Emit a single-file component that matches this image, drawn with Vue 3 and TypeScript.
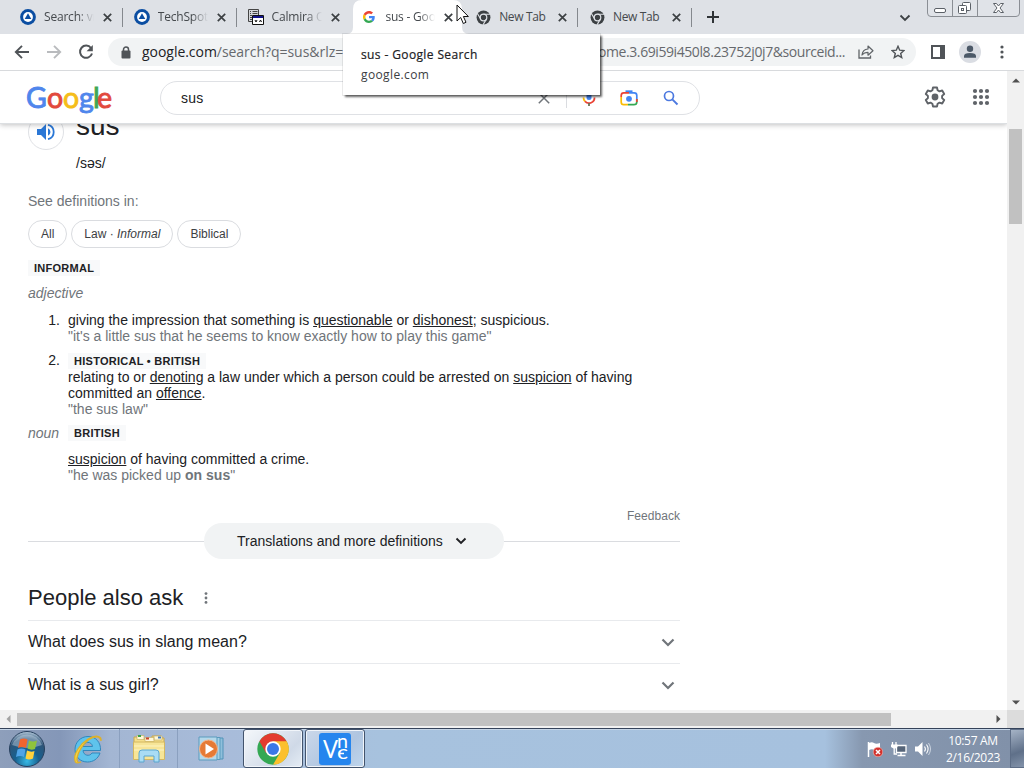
<script setup lang="ts">
interface Tab {
  title: string
  icon: 'spot' | 'calmira' | 'google' | 'chrome'
  active?: boolean
  divider?: boolean
}

const tabs: Tab[] = [
  { title: 'Search: vn', icon: 'spot', divider: true },
  { title: 'TechSpot', icon: 'spot', divider: true },
  { title: 'Calmira O', icon: 'calmira' },
  { title: 'sus - Goo', icon: 'google', active: true },
  { title: 'New Tab', icon: 'chrome', divider: true },
  { title: 'New Tab', icon: 'chrome', divider: true },
]

const questions: string[] = ['What does sus in slang mean?', 'What is a sus girl?']
const dots: number[] = [3, 9, 15]
</script>

<template>
  <div class="screen">
    <div class="tabstrip">
      <div v-for="(t, i) in tabs" :key="i" class="tab" :class="{ active: t.active, divider: t.divider }">
        <svg v-if="t.active" class="tab-shape" width="122" height="34" viewBox="0 0 122 34">
          <path d="M0 34Q6 34 6 27V9Q6 0 15 0H106Q115 0 115 9V27Q115 34 122 34Z" fill="#fff" />
        </svg>
        <svg v-if="t.icon === 'spot'" class="fav" viewBox="0 0 16 16">
          <circle cx="8" cy="8" r="7.9" fill="#0b4ea2" />
          <circle cx="8" cy="8" r="4.9" fill="#fff" />
          <path d="M8 4.3L11.3 10H4.7Z" fill="#0b4ea2" />
        </svg>
        <svg v-else-if="t.icon === 'calmira'" class="fav" viewBox="0 0 16 16">
          <path d="M.5.5h10v12h-10z" fill="#d5d7da" stroke="#444" />
          <path d="M2 2.500h1M4.500 2.500h5M2 4.500h1M4.500 4.500h5M2 6.500h2M2 8.500h2M2 10.500h2" stroke="#444" />
          <path d="M4.500 6.500h11v9h-11z" fill="#fff" stroke="#111" />
          <path d="M5 7h10v2H5z" fill="#14148c" />
          <path d="M7 11l1 2 1-2M11.500 13l1-2 1 2" fill="none" stroke="#111" />
        </svg>
        <svg v-else-if="t.icon === 'google'" class="fav" viewBox="0 0 48 48">
          <path d="M24 9.500c3.500 0 6.700 1.200 9.200 3.600l6.900-6.900C35.900 2.400 30.500 0 24 0 14.600 0 6.500 5.400 2.600 13.200l8 6.200C12.400 13.700 17.700 9.500 24 9.500z" fill="#ea4335" />
          <path d="M47 24.500c0-1.600-.2-3.100-.4-4.500H24v9h12.900c-.6 3-2.300 5.500-4.800 7.200l7.700 6C44.400 38 47 31.800 47 24.500z" fill="#4285f4" />
          <path d="M10.500 28.600a14.500 14.500 0 010-9.200l-8-6.200a24 24 0 000 21.600z" fill="#fbbc05" />
          <path d="M24 48c6.500 0 11.900-2.100 15.900-5.800l-7.700-6c-2.200 1.500-4.900 2.300-8.200 2.300-6.300 0-11.600-4.200-13.500-9.900l-8 6.200C6.500 42.600 14.600 48 24 48z" fill="#34a853" />
        </svg>
        <svg v-else class="fav" viewBox="0 0 16 16">
          <circle cx="8" cy="8" r="7.400" fill="#3c4043" />
          <circle cx="8" cy="8" r="3.500" fill="#3c4043" stroke="#dee1e6" stroke-width="1.300" />
          <path d="M8 4.500H15M4.950 9.700L1.500 3.700M11.050 9.700L7.500 15.800" stroke="#dee1e6" stroke-width="1.200" />
        </svg>
        <span class="tab-title" :class="{ fade: t.icon !== 'chrome' }">{{ t.title }}</span>
        <svg class="x" width="9" height="9" viewBox="0 0 9 9"><path d="M.8.800l7.400 7.400M8.200.800L.8 8.200" stroke="#3c4043" stroke-width="1.700" /></svg>
      </div>
      <svg class="plus" width="12" height="12" viewBox="0 0 12 12"><path d="M6 0v12M0 6h12" stroke="#2f3336" stroke-width="2" /></svg>
      <svg class="tab-menu" width="12" height="8" viewBox="0 0 12 8"><path d="M1.500 1.500L6 6l4.500-4.500" fill="none" stroke="#3c4043" stroke-width="1.800" /></svg>
      <svg class="winctl" width="94" height="18" viewBox="0 0 94 18">
        <path d="M.5-2V13q0 3.500 3.500 3.500H89q3.500 0 3.500-3.500V-2M25.500 0v16M50.500 0v16" fill="#e0e3e8" stroke="#8a8e94" />
        <g fill="#fff" stroke="#5b6067">
          <rect x="7.500" y="8.500" width="11" height="4" rx="1.500" />
          <rect x="35.500" y="2.500" width="8" height="8" rx="1" />
          <rect x="31.500" y="5.500" width="8" height="8" rx="1" />
          <rect x="34.500" y="8.500" width="2" height="2" />
          <path d="M66.500 3.500h3l2 2.500 2-2.500h3l-3.500 4.500 3.500 4.500h-3l-2-2.500-2 2.500h-3L70 8z" />
        </g>
      </svg>
    </div>

    <div class="toolbar">
      <svg class="nav" width="16" height="14" viewBox="0 0 16 14"><path d="M15 7H2M8 .8L1.800 7 8 13.200" fill="none" stroke="#505458" stroke-width="1.900" /></svg>
      <svg class="nav fwd" width="16" height="14" viewBox="0 0 16 14"><path d="M1 7h13M8 .8L14.200 7 8 13.200" fill="none" stroke="#b9bbbe" stroke-width="1.900" /></svg>
      <svg class="nav reload" width="16" height="16" viewBox="0 0 16 16">
        <path d="M13 4A6.100 6.100 0 1014 9.500" fill="none" stroke="#505458" stroke-width="2" />
        <path d="M14.800 1v6.200H8.600z" fill="#505458" />
      </svg>
      <div class="omnibox">
        <svg class="lock" width="10" height="13" viewBox="0 0 10 13">
          <rect x=".5" y="4.500" width="9" height="8" rx="1" fill="#505458" />
          <path d="M2.500 5V3.500a2.500 2.500 0 015 0V5" fill="none" stroke="#505458" stroke-width="1.500" />
        </svg>
        <span class="url"><b>google.com</b>/search?q=sus&amp;rlz=1</span>
        <span class="url tail">ome.3.69i59i450l8.23752j0j7&amp;sourceid...</span>
        <svg class="share" width="16" height="14" viewBox="0 0 16 14">
          <path d="M1 4.500V13h11.500V10.500" fill="none" stroke="#606468" stroke-width="1.300" />
          <path d="M4 10C4.500 6 6.500 4.200 10 4V1l5 4.700-5 4.500V7.300C7.500 7.300 5.600 8 4 10z" fill="none" stroke="#606468" stroke-width="1.200" stroke-linejoin="round" />
        </svg>
        <svg class="star" width="14" height="14" viewBox="0 0 14 14"><path d="M7 1.300l1.700 3.900 4.200.400-3.200 2.800 1 4.100L7 10.300l-3.700 2.200 1-4.100L1.100 5.600l4.200-.4z" fill="none" stroke="#505458" stroke-width="1.400" /></svg>
      </div>
      <svg class="panel" width="14" height="14" viewBox="0 0 14 14"><rect x="1" y="1" width="12" height="12" fill="none" stroke="#505458" stroke-width="2" /><path d="M9 1h4v12H9z" fill="#505458" /></svg>
      <svg class="avatar" width="22" height="22" viewBox="0 0 22 22">
        <circle cx="11" cy="11" r="11" fill="#dadde3" />
        <circle cx="11" cy="7.800" r="3.200" fill="#4c5968" />
        <path d="M5 16.800V15q0-3 6-3t6 3v1.800z" fill="#4c5968" />
      </svg>
      <svg class="kebab" width="4" height="14" viewBox="0 0 4 14"><g fill="#505458"><circle cx="2" cy="2" r="1.600" /><circle cx="2" cy="7" r="1.600" /><circle cx="2" cy="12" r="1.600" /></g></svg>
    </div>

    <div class="body">
      <div class="page">
        <header class="gheader">
          <svg class="glogo" width="92" height="36" viewBox="0 0 92 36">
            <text y="26" font-family="Lato, 'Open Sans', sans-serif" font-size="28.500" stroke-width=".9">
              <tspan x="1" fill="#4f86ec" stroke="#4f86ec">G</tspan><tspan x="22" fill="#e2493d" stroke="#e2493d">o</tspan><tspan x="38" fill="#f5bd1a" stroke="#f5bd1a">o</tspan><tspan x="54" fill="#4f86ec" stroke="#4f86ec">g</tspan><tspan x="68" fill="#3fa757" stroke="#3fa757">l</tspan><tspan x="72" fill="#e2493d" stroke="#e2493d">e</tspan>
            </text>
          </svg>
          <div class="search">
            <span>sus</span>
            <svg class="clear" width="12" height="12" viewBox="0 0 12 12"><path d="M.8.800l10.400 10.400M11.200.800L.8 11.200" stroke="#70757a" stroke-width="1.500" /></svg>
            <i class="bar"></i>
            <svg class="mic" width="16" height="20" viewBox="0 0 16 20">
              <rect x="5.500" y="2" width="5" height="10" rx="2.500" fill="#4285f4" />
              <path d="M2.500 9.500A5.500 5.500 0 004 13.400" fill="none" stroke="#fbbc05" stroke-width="1.800" />
              <path d="M4 13.400a5.500 5.500 0 009.500-3.900" fill="none" stroke="#ea4335" stroke-width="1.800" />
              <path d="M8 15v3" stroke="#6b6f55" stroke-width="1.800" />
            </svg>
            <svg class="lens" width="18" height="16" viewBox="0 0 18 16">
              <path d="M5.500 1.200h7" stroke="#4285f4" stroke-width="1.700" />
              <path d="M1.200 7V5.500q0-2.600 2.600-2.600H9" fill="none" stroke="#ea4335" stroke-width="1.700" />
              <path d="M9 2.900h5.200q2.600 0 2.600 2.600V9" fill="none" stroke="#4285f4" stroke-width="1.700" />
              <path d="M1.200 7v5q0 2.700 2.600 2.700H8" fill="none" stroke="#fbbc05" stroke-width="1.700" />
              <path d="M8 14.700h5.800q3 0 3-2.700V9" fill="none" stroke="#34a853" stroke-width="1.700" />
              <path d="M16.800 9v3" stroke="#ea4335" stroke-width="1.700" />
              <circle cx="9" cy="8.800" r="2.900" fill="#4285f4" />
            </svg>
            <svg class="mag" width="16" height="16" viewBox="0 0 16 16"><circle cx="6" cy="6" r="4.500" fill="none" stroke="#4c79e0" stroke-width="1.700" /><path d="M9.300 9.300l5.200 5.200" stroke="#4c79e0" stroke-width="1.900" /></svg>
          </div>
          <svg class="gear" width="22" height="22" viewBox="0 0 22 22">
            <path d="M9 1.500h4l.6 2.800 1.900 1.100 2.700-.9 2 3.500-2.100 1.900v2.200l2.100 1.900-2 3.500-2.700-.9-1.900 1.100-.6 2.800H9l-.6-2.800-1.900-1.100-2.700.9-2-3.500 2.100-1.900V9.900L1.800 8l2-3.500 2.700.9 1.900-1.100z" fill="none" stroke="#5f6368" stroke-width="1.900" stroke-linejoin="round" />
            <circle cx="11" cy="11" r="3.400" fill="#5f6368" />
          </svg>
          <svg class="apps" width="18" height="18" viewBox="0 0 18 18">
            <template v-for="y in dots" :key="y"><circle v-for="x in dots" :key="x" :cx="x" :cy="y" r="2.100" fill="#5f6368" /></template>
          </svg>
        </header>

        <main class="content">
          <div class="word">
            <div class="speaker">
              <svg width="18" height="18" viewBox="0 0 18 18">
                <path d="M0 6v6h4l5 5V1L4 6z" fill="#2a77d6" />
                <path d="M11 5.300a4 4 0 010 7.400z" fill="#2a77d6" />
                <path d="M11 1.800a7.400 7.400 0 010 14.400" fill="none" stroke="#2a77d6" stroke-width="1.800" />
              </svg>
            </div>
            <h1>sus</h1>
          </div>
          <div class="phon">/səs/</div>
          <div class="see">See definitions in:</div>
          <div class="chips">
            <span>All</span><span>Law · <em>Informal</em></span><span>Biblical</span>
          </div>
          <div class="row r-inf"><span class="badge">INFORMAL</span></div>
          <div class="row pos"><em>adjective</em></div>
          <ol class="defs">
            <li>
              <span class="num">1.</span>
              <div>
                <p>giving the impression that something is <u>questionable</u> or <u>dishonest</u>; suspicious.</p>
                <p class="ex">"it's a little sus that he seems to know exactly how to play this game"</p>
              </div>
            </li>
            <li>
              <span class="num">2.</span>
              <div>
                <div class="tagline"><span class="badge">HISTORICAL • BRITISH</span></div>
                <p>relating to or <u>denoting</u> a law under which a person could be arrested on <u>suspicion</u> of having</p>
                <p>committed an <u>offence</u>.</p>
                <p class="ex">"the sus law"</p>
              </div>
            </li>
          </ol>
          <div class="row noun"><em>noun</em><span class="badge">BRITISH</span></div>
          <div class="noun-def">
            <p><u>suspicion</u> of having committed a crime.</p>
            <p class="ex">"he was picked up <b>on sus</b>"</p>
          </div>
          <div class="feedback">Feedback</div>
          <div class="more">
            <i></i>
            <div class="more-btn">
              <span>Translations and more definitions</span>
              <svg width="12" height="8" viewBox="0 0 12 8"><path d="M1.500 1.500L6 6l4.500-4.500" fill="none" stroke="#202124" stroke-width="1.900" /></svg>
            </div>
            <i></i>
          </div>
          <div class="paa">
            <h2>People also ask</h2>
            <svg width="4" height="12" viewBox="0 0 4 12"><g fill="#70757a"><circle cx="2" cy="1.600" r="1.400" /><circle cx="2" cy="6" r="1.400" /><circle cx="2" cy="10.400" r="1.400" /></g></svg>
          </div>
          <div v-for="q in questions" :key="q" class="q">
            <span>{{ q }}</span>
            <svg width="14" height="9" viewBox="0 0 14 9"><path d="M1.500 1.500L7 7l5.500-5.500" fill="none" stroke="#70757a" stroke-width="2.200" /></svg>
          </div>
        </main>
      </div>
      <div class="vscroll">
        <svg width="8" height="5" viewBox="0 0 8 5"><path d="M0 4.500L4 .5l4 4z" fill="#505050" /></svg>
        <div class="vthumb"></div>
        <svg class="down" width="8" height="5" viewBox="0 0 8 5"><path d="M0 .5l4 4 4-4z" fill="#505050" /></svg>
      </div>
    </div>

    <div class="hscroll">
      <svg width="5" height="8" viewBox="0 0 5 8"><path d="M4.500 0L.5 4l4 4z" fill="#a3a3a3" /></svg>
      <div class="hthumb"></div>
      <svg class="right" width="5" height="8" viewBox="0 0 5 8"><path d="M.5 0l4 4-4 4z" fill="#505050" /></svg>
      <div class="corner"></div>
    </div>

    <footer class="taskbar">
      <div class="cell start">
        <svg width="38" height="38" viewBox="0 0 38 38">
          <defs>
            <radialGradient id="orb" cx=".5" cy=".85" r=".85"><stop offset="0" stop-color="#37b9e6" /><stop offset=".4" stop-color="#17608f" /><stop offset=".75" stop-color="#2e5578" /><stop offset="1" stop-color="#b7cbdd" /></radialGradient>
          </defs>
          <circle cx="19" cy="19" r="17.500" fill="url(#orb)" stroke="#27405e" />
          <path d="M4 15A16 16 0 0134 15Q19 21 4 15z" fill="#d8e6f2" opacity=".4" />
          <path d="M12 9.500q3.500-2 7.500 0L18 18q-4-2-8 0z" fill="#f0652f" />
          <path d="M21 10.500q4 2 8 0L27 19q-4 1.500-7.500-.5z" fill="#8fc43c" />
          <path d="M9.500 19.500q4-2 8 0L16 27q-4-2-8 0z" fill="#4fa4e8" />
          <path d="M19 20.500q4 2 7.500.5L25 28.500q-4 2-7.500 0z" fill="#ffd23d" />
        </svg>
      </div>
      <div class="cell ie">
        <svg width="34" height="34" viewBox="0 0 34 34">
          <path d="M17 4.500c8 0 13 6 12.500 14H12c.4 5 6.500 6.500 9 2.500h8c-2 6-7 9-12.500 9C9 30 4 24.500 4 17.500S9.500 4.500 17 4.500zM12 14.500h9.500c-.5-5.500-8.800-5.500-9.500 0z" fill="#5fc3ec" stroke="#3088bd" />
          <path d="M30 9C31 4 25 2 17 7 9 12 2 22 4 29c.5 2.500 2.500 2.500 6 1-3 1-4.500 0-4-4C7 20 12 12 18 7.500 24 3.500 29 4 30 9z" fill="#f7d442" stroke="#dcb02c" stroke-width="1.200" />
        </svg>
      </div>
      <div class="cell explorer">
        <svg width="34" height="32" viewBox="0 0 34 32">
          <path d="M2 4h8l1 2h9V3h9l1 2h2v20H2z" fill="#f5df8b" stroke="#c8a850" />
          <path d="M5 2.500h7v4H5zM13 4.500h9v4h-9zM22 3h8v4h-8z" fill="#fff7d8" stroke="#c9b36a" stroke-width=".7" />
          <path d="M6 3h3" stroke="#38a249" stroke-width="2" /><path d="M14 5.500h3" stroke="#c9432c" stroke-width="2" /><path d="M26 4.500h3" stroke="#3d79c4" stroke-width="2" />
          <path d="M1.500 9h31v17.500h-31z" fill="#f7e597" stroke="#d4b861" />
          <path d="M2 13h30M2 17h30" stroke="#fdf4c2" />
          <path d="M7 29V20q0-3 3-3h14q3 0 3 3v9h-5v-6H12v6z" fill="#a9dcf4" stroke="#5ba6cf" />
        </svg>
      </div>
      <div class="cell player">
        <svg width="28" height="28" viewBox="0 0 28 28">
          <path d="M8 3h18v21H8z" fill="#8fbfdb" stroke="#5193b8" /><path d="M5 2.500h18v22H5z" fill="#a5d0e5" stroke="#5a9bbd" /><path d="M2 2h18v23H2z" fill="#b4d8ea" stroke="#5a9bbd" />
          <circle cx="11.500" cy="14" r="9" fill="#e67a35" stroke="#f2b48b" />
          <path d="M8.500 8.500v11l8.500-5.500z" fill="#fff" />
        </svg>
      </div>
      <div class="cell win chrome">
        <svg width="32" height="32" viewBox="0 0 48 48">
          <circle cx="24" cy="24" r="23.500" fill="#34a853" />
          <path d="M24 12h20.350A23.500 23.500 0 0124 47.500L34.400 30z" fill="#fbc02d" />
          <path d="M3.650 12.250A23.500 23.500 0 0144.350 12.250H24L13.600 30z" fill="#e33b2e" />
          <circle cx="24" cy="24" r="11.500" fill="#fff" /><circle cx="24" cy="24" r="9" fill="#3b78e7" />
        </svg>
      </div>
      <div class="cell win vnc">
        <svg width="32" height="32" viewBox="0 0 32 32">
          <rect width="32" height="32" rx="3" fill="#2585ee" />
          <g fill="#fff" font-family="Lato, sans-serif">
            <text x="4" y="25" font-size="25" textLength="15" lengthAdjust="spacingAndGlyphs">V</text>
            <text x="18" y="15" font-size="19" textLength="11" lengthAdjust="spacingAndGlyphs">n</text>
            <text x="18" y="26" font-size="19" textLength="11" lengthAdjust="spacingAndGlyphs">c</text>
          </g>
          <path d="M20 20.500h5" stroke="#fff" stroke-width="1.500" />
        </svg>
      </div>
      <div class="tray">
        <svg width="16" height="16" viewBox="0 0 16 16">
          <path d="M1.500 1v15" stroke="#fff" stroke-width="1.500" /><path d="M2 2q3-1.500 5 0t6 0v7q-3 1.500-5.500 0T2 9z" fill="#fff" />
          <circle cx="11" cy="11" r="4.800" fill="#d3312c" stroke="#f3c2bd" stroke-width=".6" /><path d="M9 9l4 4M13 9l-4 4" stroke="#fff" stroke-width="1.500" />
        </svg>
        <svg width="16" height="16" viewBox="0 0 16 16">
          <path d="M5.500 4.500h9.500v7H5.500z" fill="#566579" stroke="#fff" stroke-width="1.300" /><path d="M10 12v2M6.500 14.500h8" stroke="#fff" stroke-width="1.500" />
          <path d="M1.500 1v3M5 1v3" stroke="#fff" stroke-width="1.300" /><path d="M0 3.500h6.500V6l-2 1.500h-2L0 6z" fill="#fff" /><path d="M3.200 7v6H6" fill="none" stroke="#fff" stroke-width="1.300" />
        </svg>
        <svg width="16" height="16" viewBox="0 0 16 16">
          <path d="M0 5.500v5h3l4.500 4.500V1L3 5.500z" fill="#fff" />
          <path d="M9.500 5.500q1.800 2.500 0 5M11.500 3.500q3.200 4.500 0 9" fill="none" stroke="#fff" stroke-width="1.100" /><path d="M13.500 2q4 6 0 12" fill="none" stroke="#d5dde8" stroke-width=".9" />
        </svg>
      </div>
      <div class="clock"><span>10:57 AM</span><span>2/16/2023</span></div>
      <div class="peek"></div>
    </footer>

    <div class="tooltip">
      <div class="tt1">sus - Google Search</div>
      <div class="tt2">google.com</div>
    </div>
    <svg class="cursor" width="14" height="21" viewBox="0 0 14 21"><path d="M1 1v16l3.700-3.500 2.600 6 2.700-1.200-2.600-5.800h5z" fill="#fff" stroke="#111" /></svg>
  </div>
</template>

<style>
body { margin: 0; overflow: hidden; }
</style>

<style scoped>
.screen { position: relative; width: 1024px; height: 768px; overflow: hidden; display: flex; flex-direction: column; background: #fff; font-family: "Liberation Sans", Arial, sans-serif; color: #202124; }
.screen svg { display: block; flex: none; }
h1, h2, p, ol { margin: 0; padding: 0; font-weight: 400; list-style: none; }

.tabstrip { height: 34px; flex: none; display: flex; align-items: center; background: #dee1e6; padding-left: 9px; box-sizing: border-box; }
.tab { position: relative; width: 113.8px; height: 34px; flex: none; box-sizing: border-box; padding-left: 11px; display: flex; align-items: center; }
.tab.divider { background: linear-gradient(#84888d, #84888d) right 8px / 1px 19px no-repeat; }
.tab-shape { position: absolute; left: -3px; top: 0; }
.fav { position: relative; width: 16px; height: 16px; }
.tab:nth-child(4) .fav { width: 12px; height: 12px; margin: 0 2px; }
.tab:nth-child(n+5) .fav { width: 15px; height: 15px; margin: 0 0 0 1px; }
.tab-title { position: relative; width: 50px; margin-left: 8px; font: 12px/16px "Open Sans", "Noto Sans", sans-serif; letter-spacing: -.2px; color: #45494d; white-space: nowrap; overflow: hidden; }
.tab:nth-child(n+5) .tab-title { letter-spacing: -.35px; }
.fade { -webkit-mask-image: linear-gradient(90deg, #000 68%, transparent 100%); mask-image: linear-gradient(90deg, #000 68%, transparent 100%); }
.x { position: relative; margin-left: 9px; }
.plus { margin-left: 15px; }
.tab-menu { margin-left: 180px; margin-top: 1px; }
.winctl { align-self: flex-start; margin-left: 16px; }

.toolbar { height: 37px; flex: none; box-sizing: border-box; border-bottom: 1px solid #d8dadd; display: flex; align-items: center; padding-left: 14px; background: #fff; }
.fwd { margin-left: 16px; }
.reload { margin-left: 16px; }
.omnibox { width: 808px; height: 28px; margin-left: 14px; border-radius: 14px; background: #f1f3f4; display: flex; align-items: center; box-sizing: border-box; padding-left: 13px; }
.url { margin-left: 11px; font: 14px/20px "Open Sans", "Noto Sans", sans-serif; letter-spacing: -.04px; color: #66696d; white-space: nowrap; width: 240px; flex: none; }
.url b { font-weight: 400; color: #202124; }
.url.tail { width: 246px; margin-left: 217px; display: flex; justify-content: flex-end; letter-spacing: -.42px; }
.share { margin-left: 13px; }
.star { margin-left: 17px; }
.panel { margin-left: 15px; }
.avatar { margin-left: 14px; }
.kebab { margin-left: 19px; }

.body { height: 639px; flex: none; display: flex; overflow: hidden; }
.page { width: 1007px; }
.gheader { position: relative; z-index: 2; height: 53px; background: #fff; border-bottom: 1px solid #dcdfe2; box-shadow: 0 1px 5px rgba(32, 33, 36, .28); display: flex; box-sizing: border-box; padding-left: 25px; clip-path: inset(0 0 -8px 0); }
.glogo { margin-top: 11px; }
.search { width: 540px; height: 34px; margin: 10px 0 0 43px; box-sizing: border-box; border: 1px solid #dfe1e5; border-radius: 17px; display: flex; align-items: center; padding-left: 20px; font-size: 14px; }
.search span { width: 357px; letter-spacing: .2px; }
.bar { width: 1px; height: 20px; background: #dadce0; margin-left: 16px; }
.mic { margin-left: 14px; }
.lens { margin-left: 23px; }
.mag { margin-left: 25px; }
.gear { margin: 15px 0 0 224px; }
.apps { margin: 17px 0 0 26px; }

.content { width: 652px; margin: -53px 0 0 28px; font-size: 14px; line-height: 16px; }
.word { height: 82px; display: flex; }
.speaker { width: 36px; height: 36px; box-sizing: border-box; border: 1px solid #dfe1e5; border-radius: 50%; margin-top: 43px; display: flex; align-items: center; justify-content: center; }
.word h1 { font-size: 28px; line-height: 32px; margin: 39px 0 0 12px; }
.phon { height: 20px; line-height: 20px; padding-left: 48px; }
.see { margin-top: 18px; height: 20px; line-height: 20px; color: #70757a; }
.chips { margin-top: 9px; display: flex; gap: 4px; }
.chips span { box-sizing: border-box; height: 28px; line-height: 26px; border: 1px solid #dadce0; border-radius: 14px; padding: 0 12px; font-size: 12px; color: #3c4043; white-space: nowrap; }
.row { height: 16px; display: flex; align-items: center; }
.r-inf { margin-top: 12px; }
.badge { display: block; background: #f8f9fa; font-size: 11px; font-weight: 700; letter-spacing: .27px; line-height: 16px; padding: 0 6px; white-space: nowrap; }
em { font-style: italic; }
.row em { color: #70757a; }
.pos { margin-top: 9px; }
.defs { margin-top: 11px; }
.defs li { display: flex; }
.defs li + li { margin-top: 8px; }
.num { width: 32px; text-align: right; margin-right: 8px; flex: none; }
.defs p, .noun-def p { white-space: nowrap; height: 16px; }
.defs u, .noun-def u { text-underline-offset: 1px; }
.ex { color: #70757a; }
.tagline { height: 17px; display: flex; padding-top: 1px; box-sizing: border-box; }
.noun { margin-top: 8px; }
.noun em { width: 40px; }
.noun-def { margin: 10px 0 0 40px; }
.feedback { margin-top: 25px; text-align: right; font-size: 12px; color: #70757a; letter-spacing: .04px; }
.more { height: 36px; margin-top: -1px; display: flex; align-items: center; }
.more i { flex: 1; height: 1px; background: #dadce0; }
.more-btn { width: 300px; height: 36px; border-radius: 18px; background: #f1f3f4; display: flex; align-items: center; box-sizing: border-box; padding-left: 33px; }
.more-btn span { width: 218px; white-space: nowrap; }
.paa { height: 61px; box-sizing: border-box; display: flex; align-items: center; padding-top: 16px; }
.paa h2 { font-size: 22px; line-height: 28px; width: 176px; white-space: nowrap; }
.q { height: 43px; box-sizing: border-box; border-top: 1px solid #e8eaed; display: flex; align-items: center; justify-content: space-between; padding-right: 5px; font-size: 16px; line-height: 20px; }

.vscroll { width: 17px; background: #f1f1f1; display: flex; flex-direction: column; align-items: center; padding-top: 7px; box-sizing: border-box; }
.vthumb { width: 13px; height: 95px; background: #c1c1c1; margin-top: 46px; }
.vscroll .down { margin-top: 476px; }
.hscroll { height: 18px; flex: none; background: #f1f1f1; display: flex; align-items: center; padding-left: 6px; box-sizing: border-box; }
.hthumb { width: 874px; height: 13px; margin-left: 6px; background: #c1c1c1; }
.hscroll .right { margin-left: 105px; }
.corner { width: 17px; height: 18px; background: #dcdcdc; margin-left: auto; }

.taskbar { height: 40px; flex: none; box-sizing: border-box; border-top: 1px solid #35435a; box-shadow: inset 0 1px 0 #c6d6e8; background: linear-gradient(90deg, #8e9fbb 0, #8497b8 60px, #a3b6d3 110px, #a8bcda 230px, #a7c2de 380px, #a6c1de 825px, #8798b0 862px, #8191a9 1010px); display: flex; }
.cell { height: 39px; flex: none; display: flex; align-items: center; justify-content: center; box-sizing: border-box; }
.start { width: 54px; }
.ie { width: 66px; border-right: 1px solid #8ba0bf; padding-left: 2px; }
.explorer { width: 58px; border-right: 1px solid #8ba0bf; }
.player { width: 65px; }
.win { border: 1px solid #43546d; border-radius: 3px; box-shadow: inset 0 0 0 1px #f1f5fa; }
.chrome { width: 60px; background: linear-gradient(135deg, #f5f8fb, #cfd9e7 70%, #e5edf5); }
.vnc { width: 60px; margin-left: 2px; background: linear-gradient(135deg, #cbd8ea, #afc5e0 60%, #bfd6ed); }
.tray { margin-left: 502px; display: flex; gap: 8px; align-items: center; padding-top: 1px; }
.clock { width: 70px; margin-left: 7px; display: flex; flex-direction: column; align-items: center; padding-top: 3px; box-sizing: border-box; font: 12px/17px "Open Sans", "Noto Sans", sans-serif; letter-spacing: -.3px; color: #fff; white-space: nowrap; }
.peek { margin-left: auto; width: 14px; box-sizing: border-box; border: 1px solid #5d6d86; border-right: 0; background: linear-gradient(160deg, #a5b3c6, #5f7089 60%, #8393aa); }

.tooltip { position: absolute; z-index: 5; left: 343px; top: 34px; width: 257px; height: 61px; background: #fff; box-shadow: 0 0 0 1px rgba(0, 0, 0, .08), 2px 2px 2px rgba(0, 0, 0, .6); box-sizing: border-box; padding: 11px 18px; font: 12px/20px "Open Sans", "Noto Sans", sans-serif; letter-spacing: .38px; white-space: nowrap; }
.tt1 { color: #202124; -webkit-text-stroke: .2px #202124; }
.tt2 { color: #3c4043; }
.cursor { position: absolute; z-index: 6; left: 456px; top: 4px; }
</style>
